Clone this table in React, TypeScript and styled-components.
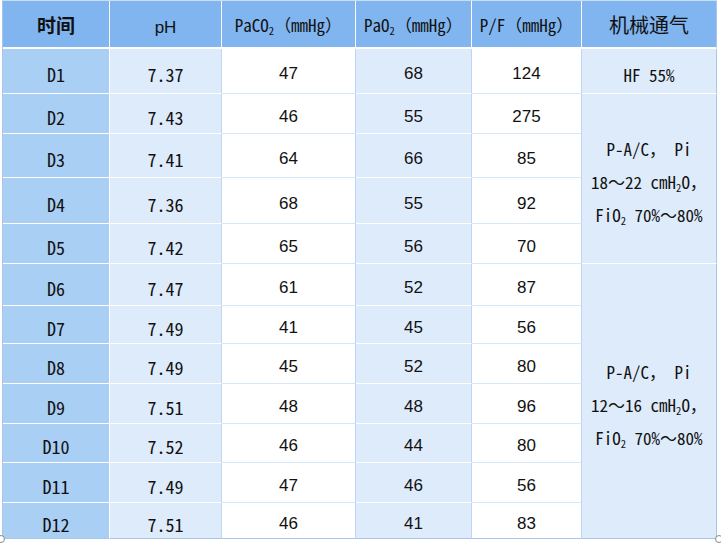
import React from "react";
import styled, { createGlobalStyle } from "styled-components";

const MONO = `"Noto Sans Mono CJK SC", "Noto Sans CJK SC", "DejaVu Sans Mono", monospace`;
const SANS = `"Liberation Sans", "Noto Sans CJK SC", sans-serif`;
const CJK = `"Noto Sans CJK SC", sans-serif`;

const HEAD_BG = "#80b5ef";
const DAY_BG = "#aacff5";
const LIGHT_BG = "#deebfb";
const OUTER = "#a9c6e6";
const V_LINE = "#bcd6f4";
const H_LINE_WHITE = "#d8e7f8";

type Tone = "light" | "white";

interface Row {
  day: string;
  ph: string;
  paco2: string;
  pao2: string;
  pf: string;
  h: number;
}

const rows: Row[] = [
  { day: "D1", ph: "7.37", paco2: "47", pao2: "68", pf: "124", h: 45 },
  { day: "D2", ph: "7.43", paco2: "46", pao2: "55", pf: "275", h: 40 },
  { day: "D3", ph: "7.41", paco2: "64", pao2: "66", pf: "85", h: 44 },
  { day: "D4", ph: "7.36", paco2: "68", pao2: "55", pf: "92", h: 46 },
  { day: "D5", ph: "7.42", paco2: "65", pao2: "56", pf: "70", h: 40 },
  { day: "D6", ph: "7.47", paco2: "61", pao2: "52", pf: "87", h: 42 },
  { day: "D7", ph: "7.49", paco2: "41", pao2: "45", pf: "56", h: 38 },
  { day: "D8", ph: "7.49", paco2: "45", pao2: "52", pf: "80", h: 40 },
  { day: "D9", ph: "7.51", paco2: "48", pao2: "48", pf: "96", h: 40 },
  { day: "D10", ph: "7.52", paco2: "46", pao2: "44", pf: "80", h: 39 },
  { day: "D11", ph: "7.49", paco2: "47", pao2: "46", pf: "56", h: 40 },
  { day: "D12", ph: "7.51", paco2: "46", pao2: "41", pf: "83", h: 36 },
];

const colWidths = [107, 112, 134, 116, 110, 135];

const App = () => {
  const last = rows.length - 1;
  return (
    <>
      <GlobalStyle />
      <Wrapper>
        <Table>
          <colgroup>
            {colWidths.map((w, i) => (
              <Col key={i} $w={w} />
            ))}
          </colgroup>
          <thead>
            <HeadRow>
              <HeadCell $font={CJK} $size={19} $bold>
                时间
              </HeadCell>
              <HeadCell $font={SANS} $size={17} $shift={7}>
                pH
              </HeadCell>
              <HeadCell $font={MONO} $size={17}>
                PaCO<Sub>2</Sub>（mmHg）
              </HeadCell>
              <HeadCell $font={MONO} $size={17}>
                PaO<Sub>2</Sub>（mmHg）
              </HeadCell>
              <HeadCell $font={MONO} $size={17}>
                P/F（mmHg）
              </HeadCell>
              <HeadCell $font={CJK} $size={20} $last>
                机械通气
              </HeadCell>
            </HeadRow>
          </thead>
          <tbody>
            {rows.map((r, i) => (
              <BodyRow key={r.day} $h={r.h}>
                <DayCell $bottom={i === last}>{r.day}</DayCell>
                <Cell $tone="light" $mono $bottom={i === last}>
                  {r.ph}
                </Cell>
                <Cell $tone="white" $bottom={i === last}>
                  {r.paco2}
                </Cell>
                <Cell $tone="light" $bottom={i === last}>
                  {r.pao2}
                </Cell>
                <Cell $tone="white" $bottom={i === last}>
                  {r.pf}
                </Cell>
                {i === 0 && <VentCell>HF 55%</VentCell>}
                {i === 1 && (
                  <VentCell rowSpan={4}>
                    <Line>P-A/C， Pi</Line>
                    <Line>
                      18～22 cmH<Sub>2</Sub>O，
                    </Line>
                    <Line>
                      FiO<Sub>2</Sub> 70%～80%
                    </Line>
                  </VentCell>
                )}
                {i === 5 && (
                  <VentCell rowSpan={7} $bottom>
                    <Line>P-A/C， Pi</Line>
                    <Line>
                      12～16 cmH<Sub>2</Sub>O，
                    </Line>
                    <Line>
                      FiO<Sub>2</Sub> 70%～80%
                    </Line>
                  </VentCell>
                )}
              </BodyRow>
            ))}
          </tbody>
        </Table>
        <Handle $side="left" />
        <Handle $side="right" />
      </Wrapper>
    </>
  );
};

const GlobalStyle = createGlobalStyle`
  html, body {
    margin: 0;
    padding: 0;
    background: #ffffff;
  }
`;

const Wrapper = styled.div`
  position: relative;
  width: 721px;
  height: 544px;
  padding-left: 2px;
  box-sizing: border-box;
`;

const Table = styled.table`
  table-layout: fixed;
  border-collapse: separate;
  border-spacing: 0;
  width: 715px;
  border-top: 1px solid #c9ddf3;
  border-left: 1px solid ${OUTER};
  color: #111111;
`;

const Col = styled.col<{ $w: number }>`
  width: ${(p) => p.$w}px;
`;

const HeadRow = styled.tr`
  height: 48px;
`;

const HeadCell = styled.th<{
  $font: string;
  $size: number;
  $bold?: boolean;
  $last?: boolean;
  $shift?: number;
}>`
  background: ${HEAD_BG};
  font-family: ${(p) => p.$font};
  font-size: ${(p) => p.$size}px;
  font-weight: ${(p) => (p.$bold ? 700 : 400)};
  text-align: center;
  vertical-align: middle;
  white-space: nowrap;
  padding: ${(p) => p.$shift || 0}px 0 0;
  border-right: 1px solid ${(p) => (p.$last ? OUTER : "#ffffff")};
  border-bottom: 2px solid #ffffff;
  color: #111111;
`;

const BodyRow = styled.tr<{ $h: number }>`
  height: ${(p) => p.$h}px;
`;

const BaseCell = styled.td<{ $bottom?: boolean }>`
  text-align: center;
  vertical-align: middle;
  padding: 6px 0 0;
  white-space: nowrap;
`;

const DayCell = styled(BaseCell)`
  background: ${DAY_BG};
  font-family: ${MONO};
  font-size: 18px;
  border-right: 1px solid #ffffff;
  border-bottom: 1px solid ${(p) => (p.$bottom ? OUTER : "#ffffff")};
`;

const Cell = styled(BaseCell)<{ $tone: Tone; $mono?: boolean }>`
  background: ${(p) => (p.$tone === "light" ? LIGHT_BG : "#ffffff")};
  font-family: ${(p) => (p.$mono ? MONO : SANS)};
  font-size: ${(p) => (p.$mono ? 18 : 17)}px;
  border-right: 1px solid ${V_LINE};
  border-bottom: 1px solid
    ${(p) => (p.$bottom ? OUTER : p.$tone === "light" ? "#ffffff" : H_LINE_WHITE)};
`;

const VentCell = styled(BaseCell)`
  background: ${LIGHT_BG};
  font-family: ${MONO};
  font-size: 17px;
  border-right: 1px solid ${OUTER};
  border-bottom: 1px solid ${(p) => (p.$bottom ? OUTER : "#ffffff")};
`;

const Line = styled.span`
  display: block;
  line-height: 33px;
`;

const Sub = styled.sub`
  font-size: 0.62em;
  vertical-align: -0.3em;
  line-height: 0;
`;

const Handle = styled.span<{ $side: "left" | "right" }>`
  position: absolute;
  top: 535px;
  ${(p) => (p.$side === "left" ? "left: -3px;" : "left: 715px;")}
  width: 6px;
  height: 6px;
  border-radius: 50%;
  border: 1px solid #8a8a8a;
  background: #ffffff;
`;

export default App;
